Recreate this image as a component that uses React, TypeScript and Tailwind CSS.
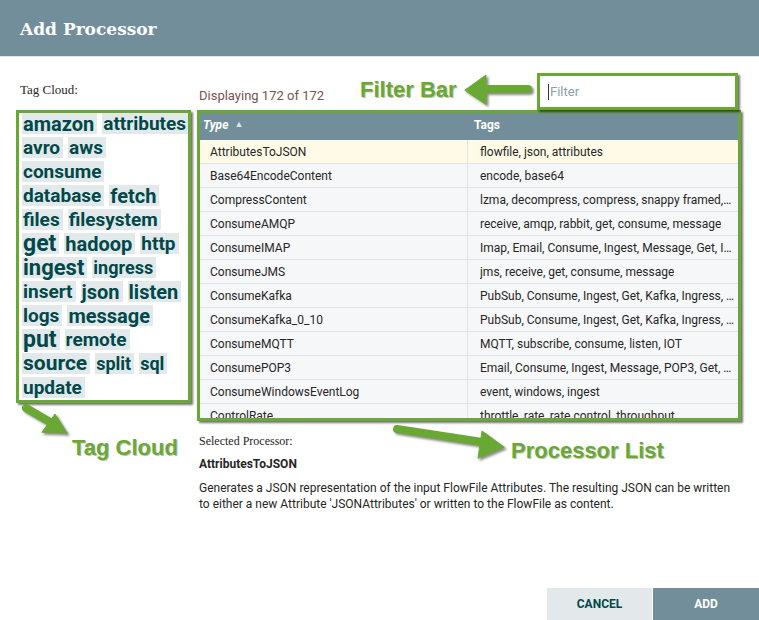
import React from 'react'

const tagRows: { t: string; s: number }[][] = [
  [{ t: 'amazon', s: 20 }, { t: 'attributes', s: 19 }],
  [{ t: 'avro', s: 19 }, { t: 'aws', s: 19 }],
  [{ t: 'consume', s: 19 }],
  [{ t: 'database', s: 19 }, { t: 'fetch', s: 20 }],
  [{ t: 'files', s: 19 }, { t: 'filesystem', s: 19 }],
  [{ t: 'get', s: 23 }, { t: 'hadoop', s: 20 }, { t: 'http', s: 19 }],
  [{ t: 'ingest', s: 22 }, { t: 'ingress', s: 18 }],
  [{ t: 'insert', s: 19 }, { t: 'json', s: 20 }, { t: 'listen', s: 20 }],
  [{ t: 'logs', s: 19 }, { t: 'message', s: 20 }],
  [{ t: 'put', s: 23 }, { t: 'remote', s: 19 }],
  [{ t: 'source', s: 21 }, { t: 'split', s: 18 }, { t: 'sql', s: 18 }],
  [{ t: 'update', s: 19 }],
]

const rows: [string, string][] = [
  ['AttributesToJSON', 'flowfile, json, attributes'],
  ['Base64EncodeContent', 'encode, base64'],
  ['CompressContent', 'lzma, decompress, compress, snappy framed, snappy, gzip, bzip2'],
  ['ConsumeAMQP', 'receive, amqp, rabbit, get, consume, message'],
  ['ConsumeIMAP', 'Imap, Email, Consume, Ingest, Message, Get, Ingress'],
  ['ConsumeJMS', 'jms, receive, get, consume, message'],
  ['ConsumeKafka', 'PubSub, Consume, Ingest, Get, Kafka, Ingress, Topic'],
  ['ConsumeKafka_0_10', 'PubSub, Consume, Ingest, Get, Kafka, Ingress, Topic'],
  ['ConsumeMQTT', 'MQTT, subscribe, consume, listen, IOT'],
  ['ConsumePOP3', 'Email, Consume, Ingest, Message, POP3, Get, Ingress'],
  ['ConsumeWindowsEventLog', 'event, windows, ingest'],
  ['ControlRate', 'throttle, rate, rate control, throughput'],
]

const green = 'border-[#6aa834]'

function Tag({ t, s }: { t: string; s: number }) {
  const size: Record<number, string> = {
    18: 'text-[18px]',
    19: 'text-[19px]',
    20: 'text-[20px]',
    21: 'text-[21px]',
    22: 'text-[22px]',
    23: 'text-[23px]',
  }
  return (
    <span className={`h-[21px] flex items-center pl-[1px] pr-[3px] bg-[#e3e8eb] text-[#004849] font-bold leading-none ${size[s]}`}>
      {t}
    </span>
  )
}

export default function App() {
  return (
    <div className="relative w-[759px] h-[620px] bg-white overflow-hidden flex flex-col font-['Roboto',sans-serif]">
      {/* header */}
      <div className="h-[57px] shrink-0 bg-[#728e9b] border-b border-[#dfe5e8] flex items-center px-5 pt-[3px]">
        <span className="text-white font-bold text-[17px] font-['DejaVu_Serif',serif]">Add Processor</span>
      </div>

      <div className="flex pl-4">
        {/* tag cloud */}
        <div className="w-[175px] shrink-0 pt-[25px]">
          <div className="text-[13px] leading-[16px] text-[#262626] font-['Liberation_Serif',serif] pl-1">Tag Cloud:</div>
          <div className={`mt-[12px] h-[293px] border-[3px] ${green} shadow-[2px_2px_2px_rgba(0,0,0,0.55)] pl-[3px] flex flex-col gap-[3px] overflow-hidden`}>
            {tagRows.map((r, i) => (
              <div key={i} className="flex gap-[5px]">
                {r.map((tg) => (
                  <Tag key={tg.t} {...tg} />
                ))}
              </div>
            ))}
          </div>
        </div>

        {/* processor list */}
        <div className="w-[544px] ml-[6px] pt-[16px]">
          <div className="flex justify-between items-end h-[37px]">
            <span className="text-[13px] leading-[16px] text-[#775351] pb-[6px] pl-[2px]">Displaying 172 of 172</span>
            <div className={`w-[201px] h-[37px] mr-[3px] border-[3px] ${green} shadow-[2px_2px_2px_rgba(0,0,0,0.55)] bg-white flex items-center pl-[8px]`}>
              <span className="w-px h-[16px] bg-[#333]" />
              <span className="text-[13px] text-[#8aa0ab] ml-[1px]">Filter</span>
            </div>
          </div>
          <div className={`h-[311px] border-[3px] ${green} shadow-[2px_2px_2px_rgba(0,0,0,0.55)] overflow-hidden text-[12px] text-[#262626]`}>
            <div className="h-[27px] bg-[#728e9b] flex items-center pb-[4px] text-white font-bold">
              <div className="w-[268px] pl-[3px] flex items-center gap-[6px]">
                <span className="italic">Type</span>
                <span className="text-[9px] text-[#dfe5e8]">▲</span>
              </div>
              <div className="pl-[6px]">Tags</div>
            </div>
            {rows.map(([type, tags], i) => (
              <div key={type} className={`h-[24px] flex border-b border-[#dfe4e7] ${i === 0 ? 'bg-[#fffbe6]' : 'bg-[#f6f7f9]'}`}>
                <div className="w-[268px] shrink-0 pl-[10px] flex items-center border-r border-[#dfe4e7]">{type}</div>
                <div className="flex-1 min-w-0 pl-[12px] pr-[4px] flex items-center">
                  <span className="truncate">{tags}</span>
                </div>
              </div>
            ))}
          </div>
          <div className="mt-[12px] pl-[2px] text-[12px] leading-[16px] text-[#262626] font-['Liberation_Serif',serif]">Selected Processor:</div>
          <div className="mt-[7px] pl-[2px] text-[12px] leading-[16px] font-bold text-[#262626]">AttributesToJSON</div>
          <div className="mt-[8px] pl-[2px] text-[12px] leading-[16px] text-[#262626] w-[545px]">
            Generates a JSON representation of the input FlowFile Attributes. The resulting JSON can be written to either a new Attribute 'JSONAttributes' or written to the FlowFile as content.
          </div>
        </div>
      </div>

      {/* footer buttons */}
      <div className="mt-auto flex justify-end gap-px">
        <button className="w-[105px] h-[32px] bg-[#e3e8eb] text-[#004849] text-[12px] font-bold">CANCEL</button>
        <button className="w-[106px] h-[32px] bg-[#728e9b] text-white text-[12px] font-bold">ADD</button>
      </div>

      {/* annotations */}
      <svg className="absolute inset-0 pointer-events-none drop-shadow-[2px_2px_1px_rgba(0,0,0,0.45)]" width="759" height="620">
        <g fill="#6aa834" stroke="#6aa834" strokeLinecap="round">
          <line x1="528" y1="89" x2="482" y2="89" strokeWidth="8" />
          <polygon points="465,90 486,75 486,104" strokeWidth="1" strokeLinejoin="round" />
          <line x1="26" y1="408" x2="50" y2="422" strokeWidth="8" />
          <polygon points="67,433 55,414 42,432" strokeWidth="1" strokeLinejoin="round" />
          <line x1="397" y1="429" x2="482" y2="442" strokeWidth="8" />
          <polygon points="504,447 482,431 478,458" strokeWidth="1" strokeLinejoin="round" />
        </g>
      </svg>
      <div className="absolute left-[360px] top-[79px] text-[22px] leading-none font-bold text-[#6aa834] font-['Liberation_Sans',sans-serif] [text-shadow:1px_1px_0_rgba(60,80,20,0.35)]">Filter Bar</div>
      <div className="absolute left-[72px] top-[437px] text-[22px] leading-none font-bold text-[#6aa834] font-['Liberation_Sans',sans-serif] [text-shadow:1px_1px_0_rgba(60,80,20,0.35)]">Tag Cloud</div>
      <div className="absolute left-[511px] top-[440px] text-[22px] leading-none font-bold text-[#6aa834] font-['Liberation_Sans',sans-serif] [text-shadow:1px_1px_0_rgba(60,80,20,0.35)]">Processor List</div>
    </div>
  )
}
